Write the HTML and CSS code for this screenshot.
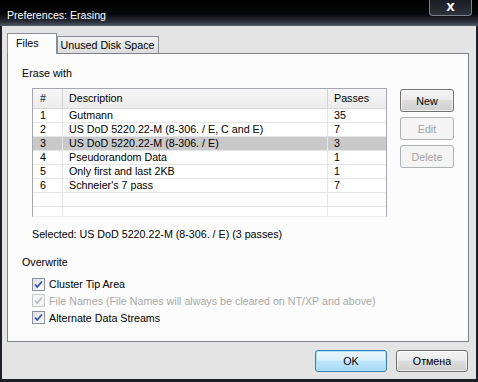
FILE: index.html
```html
<!DOCTYPE html>
<html lang="en">
<head>
    <meta charset="UTF-8">
    <title>Preferences: Erasing</title>
    <link rel="stylesheet" href="styles.css">
</head>
<body>
    <div class="window">
        <div class="titlebar">
            <span class="title">Preferences: Erasing</span>
            <button class="close-btn">X</button>
        </div>

        <div class="client">
            <div class="tabs">
                <div class="tab active">Files</div>
                <div class="tab">Unused Disk Space</div>
            </div>

            <div class="panel">
                <div class="group-label">Erase with</div>

                <div class="erase-row">
                    <div class="list">
                        <div class="list-head">
                            <div class="cell">#</div>
                            <div class="cell">Description</div>
                            <div class="cell">Passes</div>
                        </div>
                        <div class="list-body">
                            <div class="row"><div class="cell">1</div><div class="cell">Gutmann</div><div class="cell">35</div></div>
                            <div class="row"><div class="cell">2</div><div class="cell">US DoD 5220.22-M (8-306. / E, C and E)</div><div class="cell">7</div></div>
                            <div class="row selected"><div class="cell">3</div><div class="cell">US DoD 5220.22-M (8-306. / E)</div><div class="cell">3</div></div>
                            <div class="row"><div class="cell">4</div><div class="cell">Pseudorandom Data</div><div class="cell">1</div></div>
                            <div class="row"><div class="cell">5</div><div class="cell">Only first and last 2KB</div><div class="cell">1</div></div>
                            <div class="row"><div class="cell">6</div><div class="cell">Schneier's 7 pass</div><div class="cell">7</div></div>
                            <div class="row"><div class="cell"></div><div class="cell"></div><div class="cell"></div></div>
                            <div class="row"><div class="cell"></div><div class="cell"></div><div class="cell"></div></div>
                        </div>
                    </div>

                    <div class="side-buttons">
                        <button class="btn">New</button>
                        <button class="btn" disabled>Edit</button>
                        <button class="btn" disabled>Delete</button>
                    </div>
                </div>

                <div class="selected-info">Selected: US DoD 5220.22-M (8-306. / E) (3 passes)</div>

                <div class="group-label overwrite">Overwrite</div>

                <div class="checks">
                    <label class="check">
                        <svg class="box" width="13" height="13" viewBox="0 0 13 13"><defs><linearGradient id="boxfill" x1="0" y1="0" x2="1" y2="1"><stop offset="0" stop-color="#dcdde0"/><stop offset="1" stop-color="#ffffff"/></linearGradient></defs><rect x="0.5" y="0.5" width="12" height="12" fill="url(#boxfill)" stroke="#8a8f9a"/><path d="M3 6.5 L5.2 9 L10 3.5" fill="none" stroke="#3355b8" stroke-width="1.8"/></svg>
                        Cluster Tip Area
                    </label>
                    <label class="check disabled">
                        <svg class="box" width="13" height="13" viewBox="0 0 13 13"><rect x="0.5" y="0.5" width="12" height="12" fill="#f6f6f6" stroke="#c6c8cc"/><path d="M3 6.5 L5.2 9 L10 3.5" fill="none" stroke="#b8bcc4" stroke-width="1.8"/></svg>
                        File Names (File Names will always be cleared on NT/XP and above)
                    </label>
                    <label class="check">
                        <svg class="box" width="13" height="13" viewBox="0 0 13 13"><rect x="0.5" y="0.5" width="12" height="12" fill="url(#boxfill)" stroke="#8a8f9a"/><path d="M3 6.5 L5.2 9 L10 3.5" fill="none" stroke="#3355b8" stroke-width="1.8"/></svg>
                        Alternate Data Streams
                    </label>
                </div>
            </div>

            <div class="dialog-buttons">
                <button class="btn default">OK</button>
                <button class="btn">Отмена</button>
            </div>
        </div>
    </div>
</body>
</html>
```

FILE: styles.css
```css
* {
    margin: 0;
    padding: 0;
    box-sizing: border-box;
}

body {
    font-family: "Liberation Sans", Arial, sans-serif;
    font-size: 10.7px;
    color: #000;
    background: #1d2028;
    width: 478px;
    height: 382px;
    overflow: hidden;
}

.window {
    height: 382px;
    display: flex;
    flex-direction: column;
    padding: 0 2px 3px 2px;
}

.titlebar {
    height: 26px;
    display: flex;
    margin: 0 -2px;
    padding: 0 6px 0 7px;
    background: linear-gradient(#000 0%, #07080c 55%, #2c313d 85%, #565c6a 100%);
}

.title {
    align-self: center;
    margin-top: 3px;
    color: #fff;
    font-size: 10.6px;
}

.close-btn {
    margin-left: auto;
    width: 43px;
    height: 16px;
    border: 1px solid #7d8290;
    border-top: none;
    border-radius: 0 0 4px 4px;
    background: linear-gradient(#1a1c22, #2e323c);
    color: #fff;
    font-family: "DejaVu Sans", sans-serif;
    font-weight: bold;
    font-size: 11px;
    line-height: 14px;
}

.client {
    flex: 1;
    background: #e4e4e4;
    padding: 7px 7px 0 5px;
    display: flex;
    flex-direction: column;
}

/* Tabs */
.tabs {
    display: flex;
    align-items: flex-end;
    height: 20px;
    position: relative;
    z-index: 1;
}

.tab {
    height: 17px;
    padding: 0 4px 0 3px;
    border: 1px solid #8b8e96;
    border-bottom: none;
    background: linear-gradient(#f2f2f2, #dcdcdc);
    line-height: 16px;
}

.tab.active {
    height: 21px;
    margin-bottom: -1px;
    padding: 0 17px 0 8px;
    background: #fcfcfc;
    line-height: 18px;
}

/* Tab panel */
.panel {
    height: 289px;
    border: 1px solid #7e828c;
    background: #fcfcfc;
    padding: 12px 14px 0 14px;
}

.group-label {
    line-height: 14px;
}

.erase-row {
    display: flex;
    margin-top: 8px;
    margin-left: 10px;
}

.list {
    width: 357px;
    height: 129px;
    border: 1px solid #a4a7ae;
    border-bottom-color: #f0f0f0;
    background: #fff;
    overflow: hidden;
}

.list-head,
.row {
    display: grid;
    grid-template-columns: 30px 265px 60px;
}

.list-head {
    height: 20px;
    background: linear-gradient(#f6f6f6, #ececec);
    border-bottom: 1px solid #d6d6d6;
}

.list-head .cell {
    line-height: 19px;
    border-right: 1px solid #d2d2d2;
}

.cell {
    padding-left: 7px;
    white-space: nowrap;
    overflow: hidden;
}

.cell + .cell {
    padding-left: 6px;
}

.row {
    height: 14px;
    border-bottom: 1px solid #e6e6e6;
}

.row .cell {
    line-height: 13px;
    border-right: 1px solid #e6e6e6;
}

.row.selected {
    background: #c9c9c9;
}

.side-buttons {
    display: flex;
    flex-direction: column;
    gap: 5px;
    margin-left: 13px;
    margin-top: 1px;
}

.side-buttons .btn {
    width: 54px;
    height: 23px;
}

/* Buttons */
.btn {
    font-family: inherit;
    font-size: 10.7px;
    color: #000;
    border: 1px solid #707070;
    border-radius: 3px;
    background: linear-gradient(#f3f3f3 0%, #ebebeb 45%, #dddddd 50%, #cfcfcf 100%);
    box-shadow: inset 0 0 0 1px rgba(255, 255, 255, 0.7);
}

.btn:disabled {
    color: #a3a3a3;
    border-color: #adb2b5;
    background: #f4f4f4;
    box-shadow: none;
}

.btn.default {
    border-color: #3c7fb1;
    background: linear-gradient(#eaf6fd 0%, #d9f0fc 45%, #bee6fd 50%, #a7d9f5 100%);
    box-shadow: inset 0 0 0 1px #a8e4fb;
}

.selected-info {
    margin-top: 10px;
    margin-left: 10px;
    line-height: 14px;
}

.overwrite {
    margin-top: 14px;
}

.checks {
    margin-top: 7px;
    margin-left: 10px;
}

.check {
    display: flex;
    align-items: center;
    gap: 4px;
    height: 17px;
}

.check:first-child {
    height: 16px;
}

.check.disabled {
    color: #a8a8a8;
}

.box {
    flex: none;
}

.dialog-buttons {
    display: flex;
    justify-content: flex-end;
    gap: 9px;
    margin-top: 8px;
    padding-right: 1px;
}

.dialog-buttons .btn {
    width: 72px;
    height: 22px;
}
```
